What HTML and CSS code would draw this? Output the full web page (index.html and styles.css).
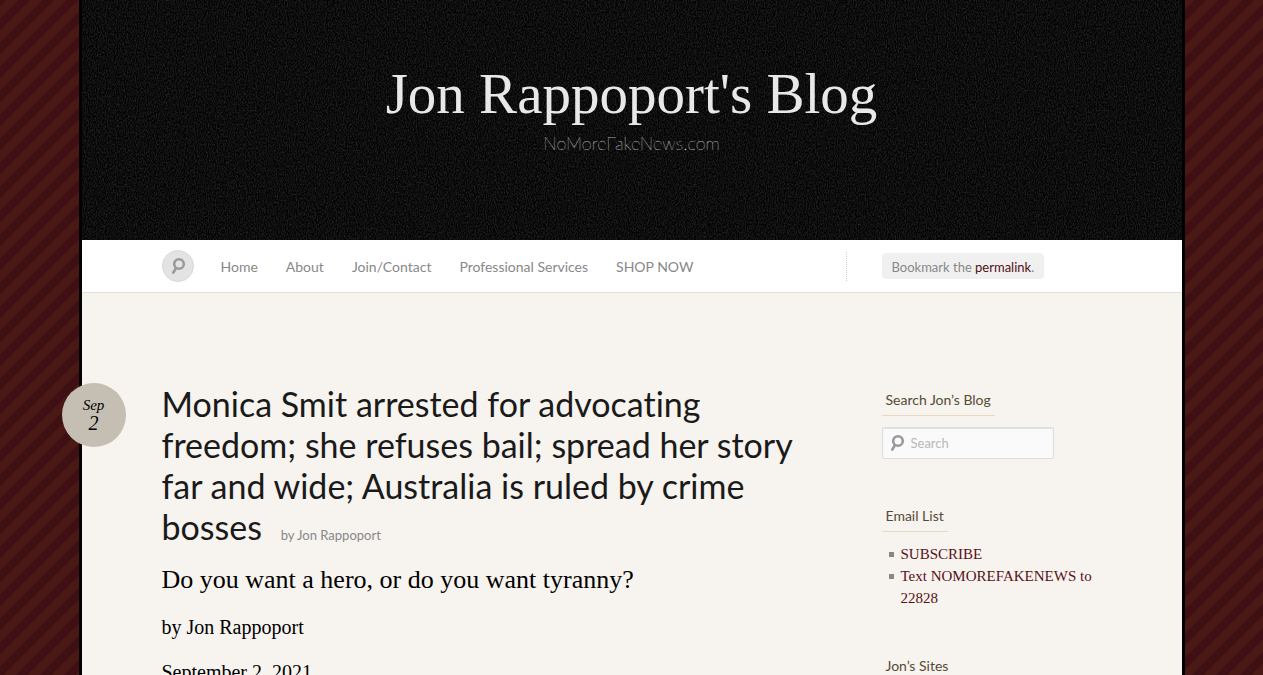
FILE: index.html
```html
<!DOCTYPE html>
<html lang="en">
    <head>
        <meta charset="UTF-8" />
        <meta name="viewport" content="width=device-width, initial-scale=1.0" />
        <title>Monica Smit arrested for advocating freedom | Jon Rappoport's Blog</title>
        <link rel="stylesheet" href="styles.css">
    </head>
    <body>
        <div class="page">
            <header class="masthead">
                <svg class="fabric" aria-hidden="true">
                    <filter id="weave" x="0" y="0" width="100%" height="100%" color-interpolation-filters="sRGB">
                        <feTurbulence type="fractalNoise" baseFrequency="0.9 0.5" numOctaves="2" seed="4" />
                        <feColorMatrix values="0.25 0 0 0 -0.072  0.25 0 0 0 -0.072  0.25 0 0 0 -0.072  0 0 0 0 1" />
                    </filter>
                    <rect width="100%" height="100%" filter="url(#weave)" />
                </svg>
                <h1><a href="#">Jon Rappoport's Blog</a></h1>
                <p>NoMoreFakeNews.com</p>
            </header>

            <nav class="menu">
                <div class="menu-main">
                    <button type="button" class="search-toggle" aria-label="Search">
                        <svg class="icon" width="16" height="18" viewBox="0 0 16 18">
                            <circle cx="9" cy="7" r="4.8" />
                            <path d="M6 11 L3.3 15.6" />
                        </svg>
                    </button>
                    <ul>
                        <li><a href="#">Home</a></li>
                        <li><a href="#">About</a></li>
                        <li><a href="#">Join/Contact</a></li>
                        <li><a href="#">Professional Services</a></li>
                        <li><a href="#">SHOP NOW</a></li>
                    </ul>
                </div>
                <div class="menu-side">
                    <p class="bookmark">Bookmark the <a href="#">permalink</a>.</p>
                </div>
            </nav>

            <div class="content">
                <article class="post">
                    <a class="post-date" href="#">
                        <span class="month">Sep</span>
                        <span class="day">2</span>
                    </a>
                    <h2>
                        Monica Smit arrested for advocating freedom; she refuses bail; spread her story far and wide; Australia is ruled by crime bosses
                        <span class="byline">by Jon Rappoport</span>
                    </h2>
                    <h3>Do you want a hero, or do you want tyranny?</h3>
                    <p>by Jon Rappoport</p>
                    <p>September 2, 2021</p>
                </article>

                <aside class="sidebar">
                    <section class="widget">
                        <h4><label for="s">Search Jon’s Blog</label></h4>
                        <form class="search-form" action="">
                            <svg class="icon" width="16" height="18" viewBox="0 0 16 18">
                                <circle cx="9" cy="7" r="4.8" />
                                <path d="M6 11 L3.3 15.6" />
                            </svg>
                            <input type="text" id="s" placeholder="Search" />
                        </form>
                    </section>
                    <section class="widget">
                        <h4>Email List</h4>
                        <ul>
                            <li><a href="#">SUBSCRIBE</a></li>
                            <li><a href="#">Text NOMOREFAKENEWS to 22828</a></li>
                        </ul>
                    </section>
                    <section class="widget">
                        <h4>Jon’s Sites</h4>
                    </section>
                </aside>
            </div>
        </div>
    </body>
</html>
```
FILE: styles.css
```css
* {
    box-sizing: border-box;
}

html {
    overflow: hidden;
}

body {
    height: 100vh;
    margin: 0;
    overflow: hidden;
    color: #000;
    background: linear-gradient(135deg, #4a1915 25%, #3e1014 25%, #3e1014 50%, #4a1915 50%, #4a1915 75%, #3e1014 75%) 7px 0 / 24px 24px;
    font-family: Georgia, "Liberation Serif", serif;
}

h1,
h2,
h3,
h4,
p,
ul {
    margin: 0;
    padding: 0;
    font-weight: 400;
}

ul {
    list-style: none;
}

a {
    color: inherit;
    text-decoration: none;
}

.page {
    max-width: 1106px;
    min-height: 100vh;
    margin: 0 auto;
    border: 3px solid #000;
    border-width: 0 3px;
    background-color: #f7f3ee;
}

.masthead {
    position: relative;
    height: 240px;
    padding-top: 64px;
    color: #e8e8e8;
    background-color: #0d0d0d;
    text-align: center;
}

.fabric {
    position: absolute;
    top: 0;
    left: 0;
    width: 100%;
    height: 100%;
}

.masthead h1,
.masthead p {
    position: relative;
}

.masthead h1 {
    font-size: 57px;
    line-height: 60px;
}

.masthead p {
    margin-top: 7px;
    color: #fff;
    font: 100 18px/24px Lato, sans-serif;
    text-shadow: 0 0 1px rgba(255, 255, 255, 0.5);
}

.menu {
    display: flex;
    height: 53px;
    padding: 0 80px;
    border-bottom: 1px solid #e6dfcc;
    color: #888;
    background-color: #fff;
    font: 14px/20px Lato, sans-serif;
}

.menu-main {
    display: flex;
    flex: 1;
    align-items: center;
}

.search-toggle {
    display: flex;
    align-items: center;
    justify-content: center;
    width: 32px;
    height: 32px;
    padding: 0;
    border: 1px solid #dadada;
    border-radius: 50%;
    background-color: #e3e3e3;
}

.icon {
    fill: none;
    stroke: #999;
    stroke-width: 2.6;
    stroke-linecap: round;
}

.menu ul {
    display: flex;
    gap: 28px;
    margin-left: 27px;
    padding-top: 2px;
}

.menu-side {
    display: flex;
    align-items: center;
    align-self: center;
    width: 256px;
    height: 29px;
    padding-left: 35px;
    border-left: 1px dotted #ccc;
}

.bookmark {
    padding: 4px 10px 2px;
    border-radius: 4px;
    background-color: #f0f0f0;
    font-size: 13px;
}

.bookmark a {
    color: #500f14;
}

.content {
    display: flex;
    gap: 80px;
    padding: 90px 80px 0;
}

.post {
    position: relative;
    flex: 1;
    font-size: 20px;
    line-height: 25px;
}

.post-date {
    position: absolute;
    top: 0;
    left: -100px;
    width: 64px;
    height: 64px;
    padding-top: 14px;
    border-radius: 50%;
    background-color: #c5beb2;
    font-style: italic;
    text-align: center;
}

.post-date span {
    display: block;
}

.month {
    font-size: 15px;
    line-height: 17px;
}

.day {
    font-size: 20px;
    line-height: 18px;
}

.post h2 {
    color: #1a1a1a;
    font: 34px/41px Lato, sans-serif;
    font-variant-ligatures: none;
}

.byline {
    margin-left: 10px;
    color: #888;
    font-size: 13px;
    line-height: 20px;
}

.post h3 {
    margin: 18px 0 20px;
    font-size: 26px;
    line-height: 30px;
}

.post p {
    margin-bottom: 20px;
}

.sidebar {
    width: 220px;
}

.widget {
    margin-bottom: 40px;
}

.widget h4 {
    display: table;
    margin-bottom: 11px;
    padding: 7px 4px 5px;
    border-bottom: 1px solid #e6dabe;
    color: #554b35;
    font: 14px/20px Lato, sans-serif;
}

.search-form {
    display: flex;
    align-items: center;
    gap: 6px;
    width: 172px;
    height: 32px;
    padding: 0 6px;
    border: 1px solid #ddd;
    border-radius: 2px;
    background-color: #fafafa;
    box-shadow: inset 0 1px 1px rgba(0, 0, 0, 0.1);
}

.search-form input {
    flex: 1;
    min-width: 0;
    padding: 0;
    border: 0;
    background: none;
    font: 13px/20px Lato, sans-serif;
    outline: none;
}

.search-form input::placeholder {
    color: #b8b8b8;
}

.widget ul {
    padding-left: 19px;
    color: #581116;
    font-size: 15px;
    line-height: 22px;
}

.widget li {
    position: relative;
}

.widget li::before {
    content: "";
    position: absolute;
    top: 9px;
    left: -12px;
    width: 5px;
    height: 5px;
    background-color: #8c8880;
}
```
